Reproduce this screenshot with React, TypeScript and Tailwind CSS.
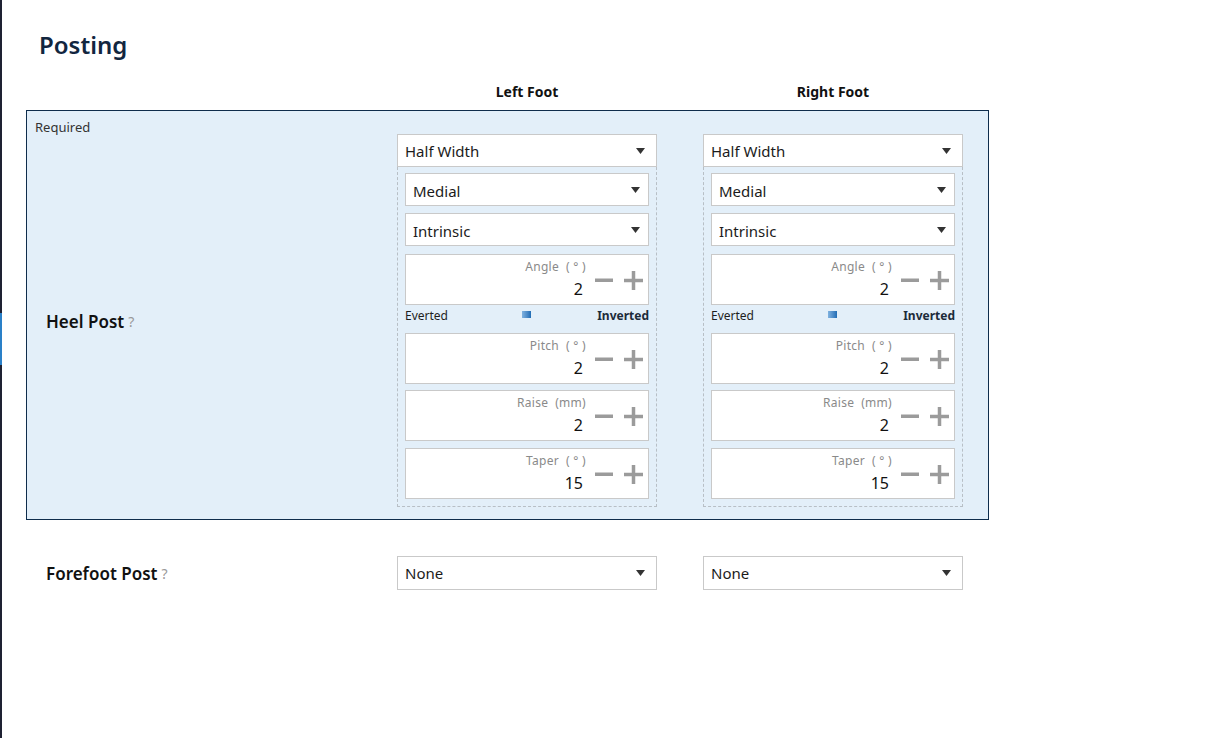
import React from "react";

const font = { fontFamily: '"Noto Sans", "Open Sans", sans-serif' };

function Arrow() {
  return (
    <svg width="9" height="6" viewBox="0 0 9 6" className="shrink-0">
      <path d="M0 0 H9 L4.5 6 Z" fill="#333" />
    </svg>
  );
}

function Select({ value, inner, tall }: { value: string; inner?: boolean; tall?: boolean }) {
  return (
    <div
      className={`flex ${tall ? "h-[34px]" : "h-[33px]"} items-center justify-between border border-[#c9c9c9] bg-white ${
        inner ? "pl-[7px] pr-[8px]" : "pl-[7px] pr-[11px]"
      }`}
    >
      <span className={`${inner ? "pt-[3px]" : tall ? "pt-[1px]" : "pt-[2px]"} text-[15px] text-[#1b1b1b]`}>{value}</span>
      <Arrow />
    </div>
  );
}

function NumberBox({ label, value, className = "" }: { label: string; value: string; className?: string }) {
  return (
    <div className={`flex h-[51px] items-start border border-[#c9c9c9] bg-white pr-[5px] ${className}`}>
      <div className="flex flex-1 flex-col items-end pr-[9px] pt-[4px]">
        <span className="whitespace-pre text-[12px] leading-[16px] tracking-[0.3px] text-[#8a8a8a]">{label}</span>
        <span className="mr-[3px] mt-[4px] text-[16px] leading-[20px] text-[#111]">{value}</span>
      </div>
      <div className="flex items-center gap-[11px] self-center pt-[1px]">
        <svg width="18" height="18" viewBox="0 0 18 18">
          <rect x="0" y="7.5" width="18" height="3.5" fill="#9b9b9b" />
        </svg>
        <svg width="19" height="19" viewBox="0 0 19 19">
          <rect x="0" y="7.75" width="19" height="3.5" fill="#9b9b9b" />
          <rect x="7.75" y="0" width="3.5" height="19" fill="#9b9b9b" />
        </svg>
      </div>
    </div>
  );
}

function FootColumn() {
  return (
    <div className="flex w-[260px] flex-col">
      <Select value="Half Width" />
      <div className="flex flex-col border-x border-b border-dashed border-[#b8bfc6] px-[7px] pb-[7px] pt-[6px]">
        <Select value="Medial" inner />
        <div className="mt-[7px]">
          <Select value="Intrinsic" inner />
        </div>
        <NumberBox className="mt-[8px]" label="Angle  ( ° )" value="2" />
        <div className="grid h-[28px] grid-cols-3 items-start pt-[3px]">
          <span className="text-[12px] leading-[16px] text-[#1e1e1e]">Everted</span>
          <span className="mt-[3px] block h-[7px] w-[9px] justify-self-center bg-gradient-to-r from-[#7fb2e0] to-[#1f6db5]" />
          <span className="justify-self-end text-[12px] font-bold leading-[16px] text-[#1c2b3a]">Inverted</span>
        </div>
        <NumberBox label="Pitch  ( ° )" value="2" />
        <NumberBox className="mt-[6px]" label="Raise  (mm)" value="2" />
        <NumberBox className="mt-[7px]" label="Taper  ( ° )" value="15" />
      </div>
    </div>
  );
}

export default function App() {
  return (
    <div className="flex h-screen w-full bg-white" style={font}>
      <div className="flex w-[2px] shrink-0 flex-col bg-[#1e2132]">
        <div className="mt-[313px] h-[52px] w-full bg-[#2a80c8]" />
      </div>
      <div className="flex flex-col pl-[24px]">
        <h1 className="ml-[13px] mt-[28px] text-[24px] font-semibold leading-[34px] text-[#12263f]">
          Posting
        </h1>
        <div className="mt-[17px] flex h-[25px] items-center pl-[371px]">
          <div className="w-[260px] text-center text-[14px] font-bold text-[#111]">Left Foot</div>
          <div className="ml-[46px] w-[260px] text-center text-[14px] font-bold text-[#111]">Right Foot</div>
        </div>
        <div className="relative mt-[6px] flex w-[963px] items-center border border-[#0f2d4c] bg-[#e3eff9] pb-[12px] pt-[23px]">
          <span className="absolute left-[8px] top-[7px] text-[13px] text-[#333]">Required</span>
          <div className="flex w-[370px] items-center pl-[19px] pt-[2px]">
            <span className="text-[17px] font-semibold text-[#111]">Heel Post</span>
            <span className="ml-[4px] text-[14px] text-[#999]">?</span>
          </div>
          <FootColumn />
          <div className="w-[46px]" />
          <FootColumn />
        </div>
        <div className="mt-[36px] flex items-center">
          <div className="flex w-[371px] items-center pl-[20px] pt-[1px]">
            <span className="text-[17px] font-semibold text-[#111]">Forefoot Post</span>
            <span className="ml-[4px] text-[14px] text-[#999]">?</span>
          </div>
          <div className="w-[260px]">
            <Select value="None" tall />
          </div>
          <div className="ml-[46px] w-[260px]">
            <Select value="None" tall />
          </div>
        </div>
      </div>
    </div>
  );
}
